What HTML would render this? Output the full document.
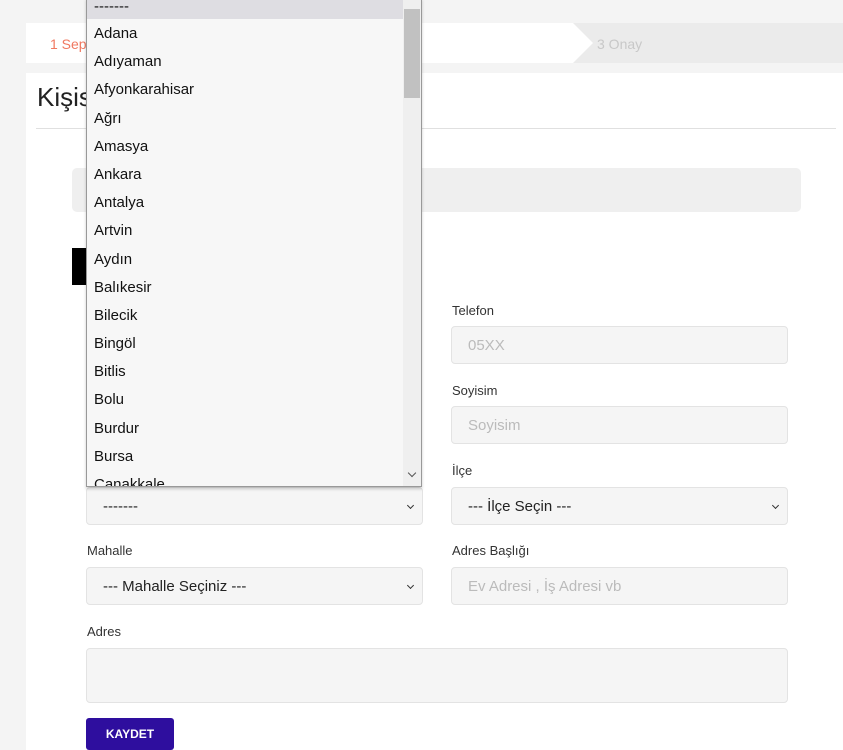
<!DOCTYPE html>
<html><head><meta charset="utf-8"><style>
*{box-sizing:border-box;margin:0;padding:0}
body{width:843px;height:750px;overflow:hidden;background:#f4f4f4;font-family:"Liberation Sans",sans-serif;position:relative}
.abs{position:absolute}
.lbl{position:absolute;font-size:13px;color:#333}
.inp{position:absolute;height:38px;background:#f5f5f5;border:1px solid #e3e3e3;border-radius:4px;font-size:15px;color:#bbb;padding:0 16px;line-height:38px}
.sel{color:#222}
.sel:after{content:"";position:absolute;right:9px;top:15px;width:4px;height:4px;border-right:1.5px solid #333;border-bottom:1.5px solid #333;transform:rotate(45deg)}
.dd{position:absolute;left:86px;top:-2px;width:336px;height:489px;background:#f7f7f7;border:1px solid #999;box-shadow:0 2px 3px rgba(0,0,0,.2);overflow:hidden}
.dd div{height:28.2px;line-height:30px;padding-left:7px;font-size:15px;color:#111}
</style></head><body>
<div class="abs" style="left:26px;top:23px;width:560px;height:40px;background:#fff"></div>
<div class="abs" style="left:573px;top:23px;width:270px;height:40px;background:#ebebeb"></div>
<svg class="abs" style="left:560px;top:23px" width="40" height="40"><polygon points="0,0 13,0 33,20 13,40 0,40" fill="#fff"/></svg>
<div class="abs" style="left:50px;top:36px;font-size:14px;color:#f07860">1 Sepet</div>
<div class="abs" style="left:597px;top:36px;font-size:14px;color:#c8c8c8">3 Onay</div>
<div class="abs" style="left:26px;top:73px;width:817px;height:677px;background:#fff"></div>
<div class="abs" style="left:37px;top:82px;font-size:26px;color:#222">Kişisel</div>
<div class="abs" style="left:36px;top:128px;width:800px;height:1px;background:#e0e0e0"></div>
<div class="abs" style="left:72px;top:168px;width:729px;height:44px;background:#efefef;border-radius:5px"></div>
<div class="abs" style="left:72px;top:248px;width:20px;height:37px;background:#000"></div>
<div class="lbl" style="left:452px;top:303px">Telefon</div>
<div class="inp" style="left:451px;top:326px;width:337px">05XX</div>
<div class="lbl" style="left:452px;top:383px">Soyisim</div>
<div class="inp" style="left:451px;top:406px;width:337px">Soyisim</div>
<div class="lbl" style="left:452px;top:463px">İlçe</div>
<div class="inp sel" style="left:86px;top:487px;width:337px">-------</div>
<div class="inp sel" style="left:451px;top:487px;width:337px">--- İlçe Seçin ---</div>
<div class="lbl" style="left:87px;top:543px">Mahalle</div>
<div class="lbl" style="left:452px;top:543px">Adres Başlığı</div>
<div class="inp sel" style="left:86px;top:567px;width:337px">--- Mahalle Seçiniz ---</div>
<div class="inp" style="left:451px;top:567px;width:337px">Ev Adresi , İş Adresi vb</div>
<div class="lbl" style="left:87px;top:624px">Adres</div>
<div class="inp" style="left:86px;top:648px;width:702px;height:55px"></div>
<div class="abs" style="left:86px;top:718px;width:88px;height:32px;background:#2e0e9e;border-radius:3px;color:#fff;font-size:12px;font-weight:bold;text-align:center;line-height:32px">KAYDET</div>
<div class="dd">
<div style="background:#dedde2;height:20px;line-height:16px">-------</div>
<div>Adana</div><div>Adıyaman</div><div>Afyonkarahisar</div><div>Ağrı</div><div>Amasya</div><div>Ankara</div><div>Antalya</div><div>Artvin</div><div>Aydın</div><div>Balıkesir</div><div>Bilecik</div><div>Bingöl</div><div>Bitlis</div><div>Bolu</div><div>Burdur</div><div>Bursa</div><div>Çanakkale</div>
<span class="abs" style="right:0;top:0;width:18px;height:487px;background:#efefef"></span>
<span class="abs" style="right:1px;top:10px;width:16px;height:89px;background:#c1c1c1"></span>
<span class="abs" style="right:6px;top:471px;width:6px;height:6px;border-right:1.5px solid #555;border-bottom:1.5px solid #555;transform:rotate(45deg)"></span>
</div>
</body></html>
